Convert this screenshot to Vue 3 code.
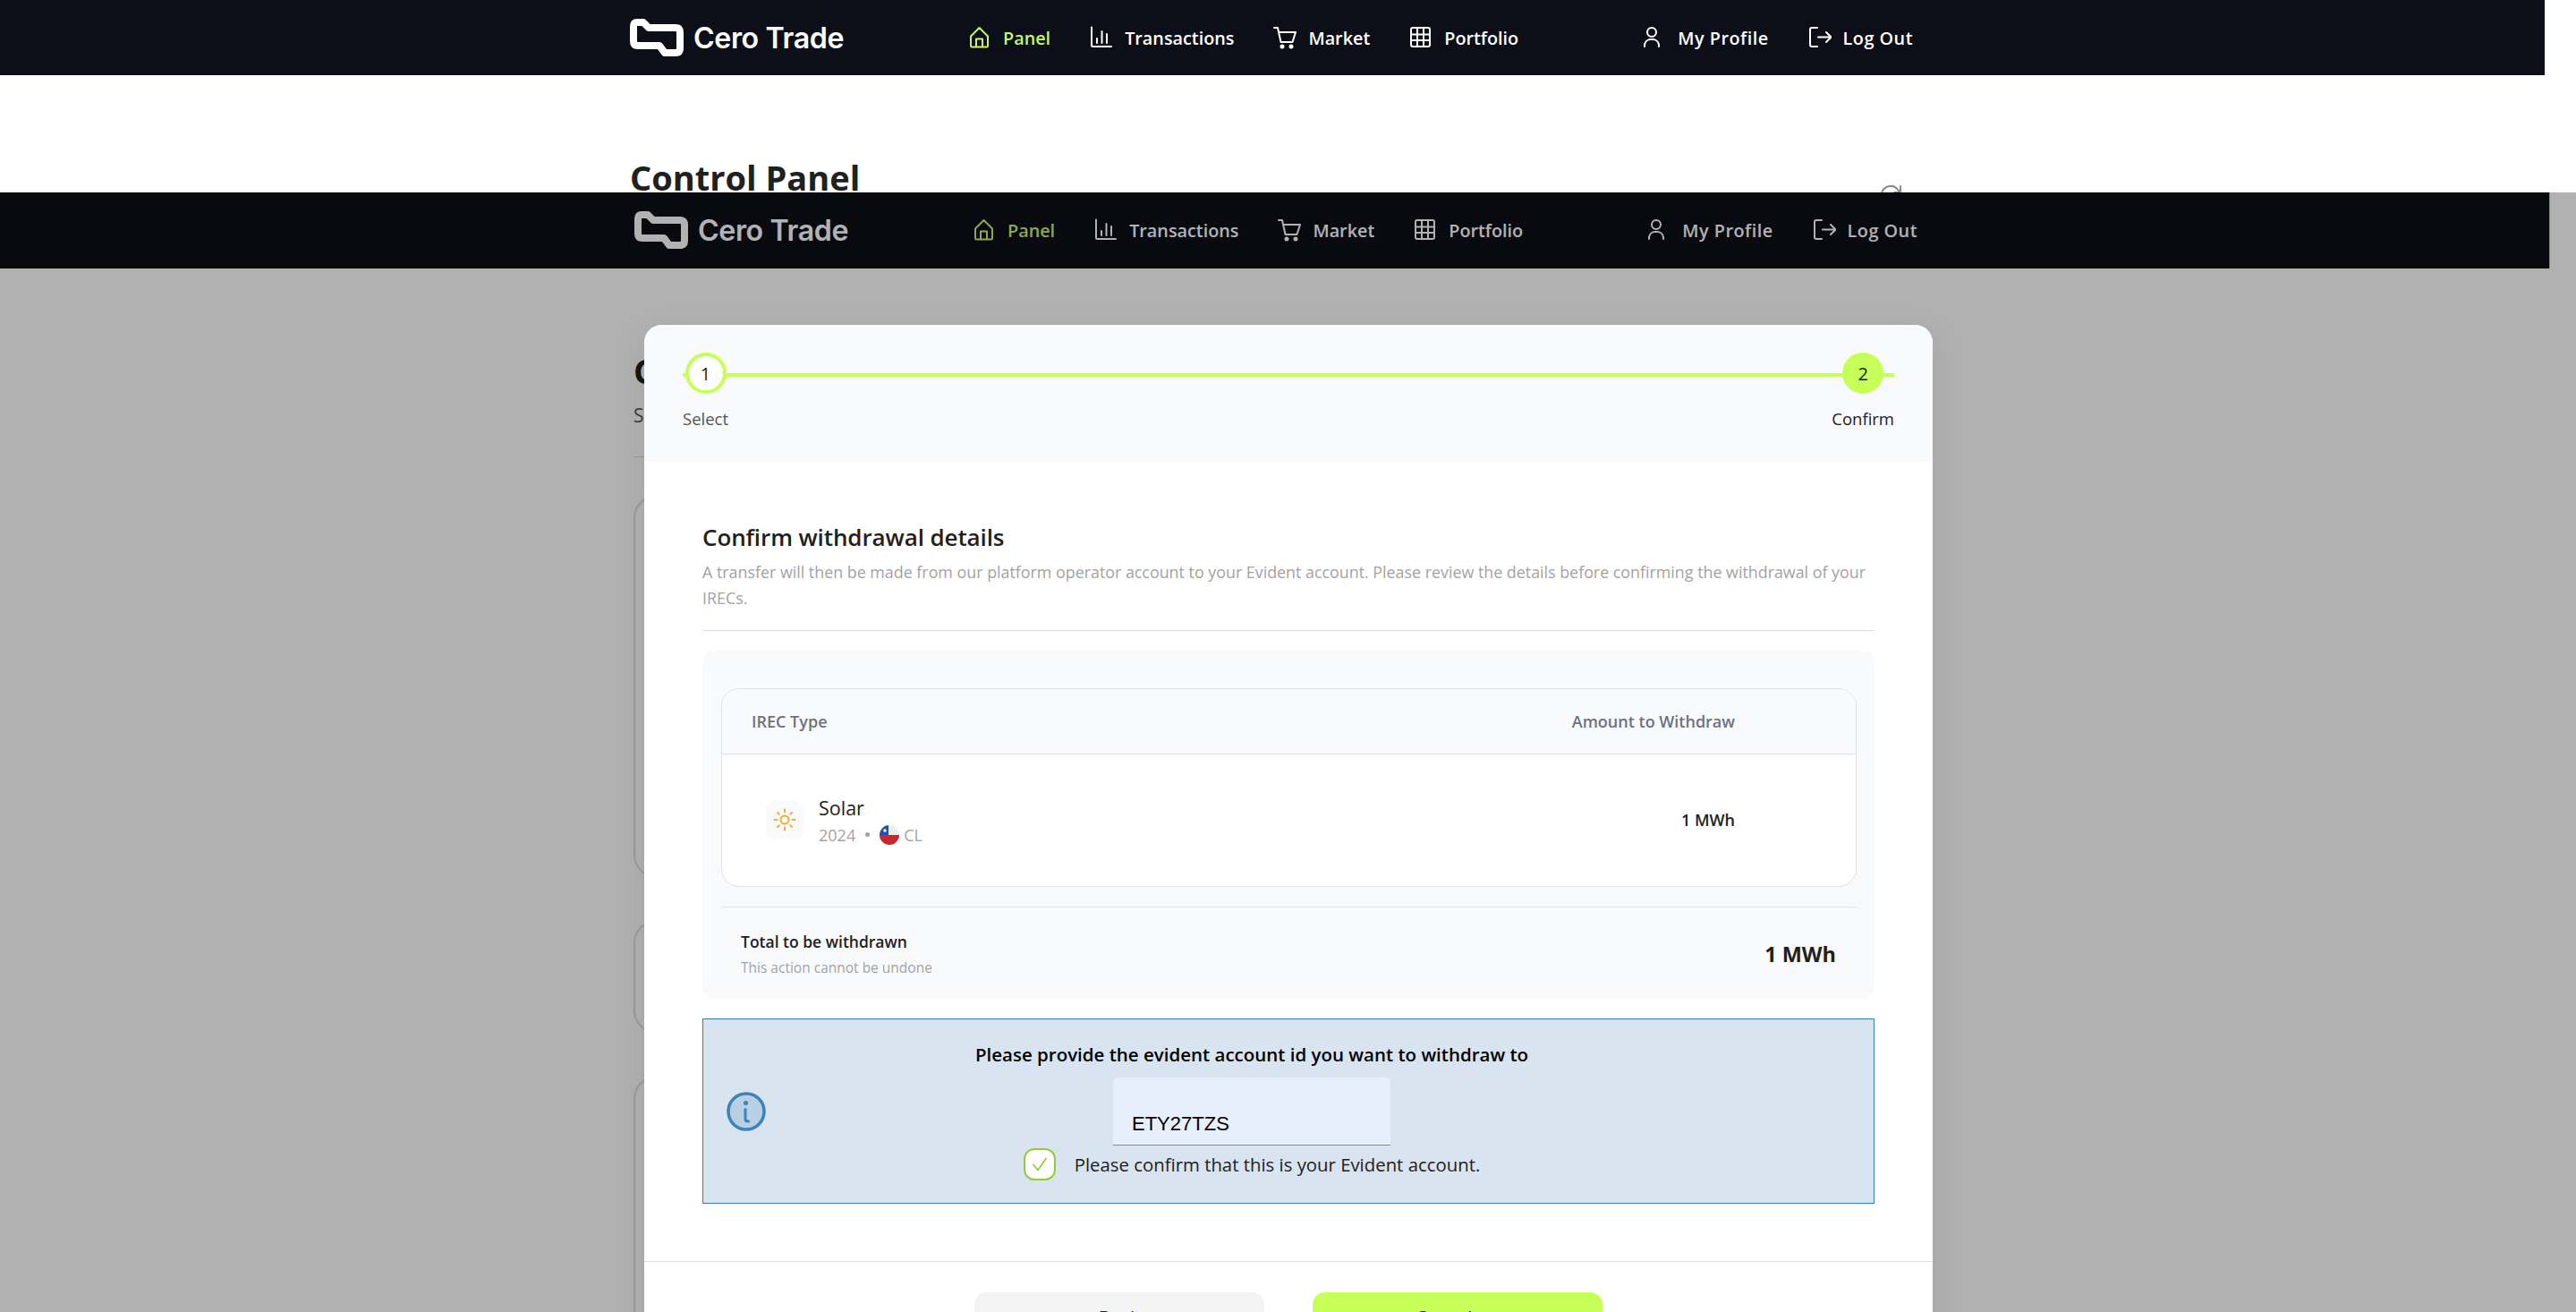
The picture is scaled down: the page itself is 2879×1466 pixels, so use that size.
<script setup>
const shots = [
  { id: 'top', dim: false },
  { id: 'dim', dim: true },
];

const links = [
  { label: 'Panel', icon: 'home', active: true },
  { label: 'Transactions', icon: 'chart' },
  { label: 'Market', icon: 'cart' },
  { label: 'Portfolio', icon: 'grid' },
];

const accountLinks = [
  { label: 'My Profile', icon: 'user' },
  { label: 'Log Out', icon: 'logout' },
];

const iconPaths = {
  home: 'M3 11.5 12.5 2 22 11.5V22a1.5 1.5 0 0 1-1.5 1.5h-16A1.5 1.5 0 0 1 3 22ZM9 23.5V14.5h7v9',
  chart: 'M2 1.5V21.5a1.5 1.5 0 0 0 1.5 1.5H24M8 19v-5M13.500 19V6M19 19V9',
  cart: 'M1 2h4l3.500 16h13L25 7H6.200',
  grid: 'M4 2h17a2 2 0 0 1 2 2v17a2 2 0 0 1-2 2H4a2 2 0 0 1-2-2V4a2 2 0 0 1 2-2ZM2 9.500h21M2 16h21M9 2v21M16 2v21',
  user: 'M10 2a5 5 0 1 1 0 10a5 5 0 0 1 0-10ZM2 23v-2a7 7 0 0 1 7-6h2a7 7 0 0 1 7 6v2',
  logout: 'M10 2H4a2 2 0 0 0-2 2v17a2 2 0 0 0 2 2h6M11 12.500h14M20 7l5.500 5.500L20 18',
};
</script>

<template>
  <div class="viewport">
    <section v-for="shot in shots" :key="shot.id" class="shot" :class="{ dim: shot.dim }">
      <header class="nav">
        <div class="nav-inner">
          <div class="brand">
            <svg class="brand-mark" width="60" height="42" viewBox="0 0 60 42" fill="none">
              <path d="M8 4H15L21 10H51Q56 10 56 15V33Q56 38 51 38H39L33 30H9Q4 30 4 25V9Q4 4 8 4Z" stroke="currentColor" stroke-width="8" stroke-linejoin="round" />
            </svg>
            <span class="brand-name">Cero Trade</span>
          </div>
          <nav class="links">
            <a v-for="link in links" :key="link.label" class="link" :class="{ active: link.active }">
              <svg width="26" height="26" viewBox="0 0 26 26" fill="none" stroke="currentColor" stroke-width="2" stroke-linecap="round" stroke-linejoin="round">
                <path :d="iconPaths[link.icon]" />
                <template v-if="link.icon === 'cart'">
                  <circle cx="10" cy="23" r="1.500" fill="currentColor" />
                  <circle cx="20" cy="23" r="1.500" fill="currentColor" />
                </template>
              </svg>
              <span>{{ link.label }}</span>
            </a>
          </nav>
          <nav class="links account">
            <a v-for="link in accountLinks" :key="link.label" class="link">
              <svg width="26" height="26" viewBox="0 0 26 26" fill="none" stroke="currentColor" stroke-width="2" stroke-linecap="round" stroke-linejoin="round">
                <path :d="iconPaths[link.icon]" />
              </svg>
              <span>{{ link.label }}</span>
            </a>
          </nav>
        </div>
      </header>

      <main class="page">
        <div class="page-head">
          <h1>Control Panel</h1>
          <svg class="refresh" width="26" height="26" viewBox="0 0 26 26" fill="none" stroke="#8a8a8a" stroke-width="2" stroke-linecap="round" stroke-linejoin="round">
            <path d="M3 13a10 10 0 0 1 18-6l3 3M24 3v7h-7" />
          </svg>
        </div>
        <p class="page-sub">Summary</p>
        <div class="page-rule"></div>
        <div class="card card-a"></div>
        <div class="card card-b"></div>
        <div class="card card-c"></div>
      </main>

      <template v-if="shot.dim">
        <div class="overlay"></div>
        <div class="modal">
          <div class="stepper">
            <div class="step">
              <div class="step-dot">1</div>
              <span class="step-label">Select</span>
            </div>
            <div class="step current">
              <div class="step-dot">2</div>
              <span class="step-label">Confirm</span>
            </div>
          </div>

          <div class="modal-body">
            <h2>Confirm withdrawal details</h2>
            <p class="lead">A transfer will then be made from our platform operator account to your Evident account. Please review the details before confirming the withdrawal of your IRECs.</p>

            <div class="summary">
              <div class="table">
                <div class="table-head">
                  <span>IREC Type</span>
                  <span>Amount to Withdraw</span>
                </div>
                <div class="table-row">
                  <div class="source">
                    <div class="source-icon">
                      <svg width="26" height="26" viewBox="0 0 26 26" fill="none" stroke="#e9b13c" stroke-width="2" stroke-linecap="round">
                        <circle cx="13" cy="13" r="4.500" />
                        <path d="M13 1.500v3M13 21.500v3M1.500 13h3M21.500 13h3M5 5l1.800 1.800M19.200 19.200 21 21M5 21l1.800-1.800M19.200 6.800 21 5" />
                      </svg>
                    </div>
                    <div class="source-text">
                      <div class="source-name">Solar</div>
                      <div class="source-meta">
                        <span>2024</span>
                        <i class="bullet"></i>
                        <svg class="flag" width="22" height="22" viewBox="0 0 22 22">
                          <clipPath id="flag-round"><circle cx="11" cy="11" r="11" /></clipPath>
                          <g clip-path="url(#flag-round)">
                            <rect width="22" height="11" fill="#eeeeee" />
                            <rect y="11" width="22" height="11" fill="#c9262f" />
                            <rect width="10" height="11" fill="#2152ad" />
                            <circle cx="6" cy="6" r="1.800" fill="#ffffff" />
                          </g>
                        </svg>
                        <span>CL</span>
                      </div>
                    </div>
                  </div>
                  <span class="amount">1 MWh</span>
                </div>
              </div>
              <div class="total">
                <div>
                  <div class="total-label">Total to be withdrawn</div>
                  <div class="total-note">This action cannot be undone</div>
                </div>
                <span class="total-value">1 MWh</span>
              </div>
            </div>

            <div class="notice">
              <svg class="notice-icon" width="44" height="44" viewBox="0 0 44 44">
                <circle cx="22" cy="22" r="20" fill="#b8cfe4" stroke="#3f82b8" stroke-width="3.500" />
                <circle cx="21.500" cy="12.500" r="2.500" fill="#3f82b8" />
                <path d="M21 19.500v10.500q0 3 3.500 3" fill="none" stroke="#3f82b8" stroke-width="3" stroke-linecap="round" />
              </svg>
              <div class="notice-body">
                <p class="notice-title">Please provide the evident account id you want to withdraw to</p>
                <input class="account-input" value="ETY27TZS" readonly />
                <div class="confirm-row">
                  <div class="checkbox">
                    <svg width="20" height="20" viewBox="0 0 20 20" fill="none" stroke="#93cb3f" stroke-width="1.700" stroke-linecap="round" stroke-linejoin="round">
                      <path d="M3 10.500 8 16.500 17 3.500" />
                    </svg>
                  </div>
                  <span>Please confirm that this is your Evident account.</span>
                </div>
              </div>
            </div>
          </div>

          <div class="modal-foot">
            <button class="btn btn-back">Back</button>
            <button class="btn btn-complete">Complete</button>
          </div>
        </div>
      </template>
    </section>
  </div>
</template>

<style scoped>
.viewport {
  width: 2879px;
  height: 1466px;
  overflow: hidden;
  font-family: "Open Sans", "Noto Sans", sans-serif;
  color: #1f2020;
}

.shot {
  position: relative;
  height: 215px;
  overflow: hidden;
}

.shot.dim {
  height: 1251px;
  background: #fefefe;
}

.nav {
  width: 2844px;
  height: 84px;
  background: #0c0f18;
  color: #fff;
}

.dim .nav {
  width: 2849px;
  height: 85px;
  border-right: 1px solid #c4c4c4;
}

.nav-inner {
  display: flex;
  align-items: center;
  width: 1434px;
  height: 84px;
  margin-left: 704px;
}

.dim .nav-inner {
  margin-left: 709px;
}

.brand {
  display: flex;
  align-items: center;
  gap: 11px;
  width: 378px;
}

.brand-name {
  font-family: Inter, "Liberation Sans", sans-serif;
  font-size: 32.2px;
  font-weight: 600;
  letter-spacing: -0.4px;
}

.links {
  display: flex;
  gap: 44px;
}

.account {
  margin-left: auto;
  letter-spacing: 0.5px;
}

.link {
  display: flex;
  align-items: center;
  gap: 13px;
  font-size: 19.8px;
  font-weight: 600;
  white-space: nowrap;
}

.link.active {
  color: #c6f56a;
}

.page {
  padding: 90px 0 0 704px;
  width: 1430px;
}

.dim .page {
  padding-left: 708px;
}

.page-head {
  display: flex;
  justify-content: space-between;
  align-items: flex-start;
  height: 58px;
}

.page-head h1 {
  margin: 0;
  font-size: 38px;
  line-height: 48px;
  font-weight: 700;
}

.refresh {
  margin-top: 31px;
  margin-right: 8px;
}

.page-sub {
  margin: 1px 0 0;
  font-size: 21px;
  line-height: 30px;
  color: #555;
}

.page-rule {
  height: 1px;
  margin-top: 31px;
  background: #ddd;
}

.card {
  margin-top: 47px;
  border: 2px solid #ddd;
  border-radius: 26px;
  box-sizing: border-box;
}

.card-a { height: 428px; margin-top: 42px; }
.card-b { height: 127px; }
.card-c { height: 300px; }

.overlay {
  position: absolute;
  inset: 0;
  background: rgba(0, 0, 0, 0.3);
}

.modal {
  position: absolute;
  left: 720px;
  top: 148px;
  width: 1440px;
  background: #fff;
  border-radius: 20px 20px 0 0;
  box-shadow: 0 10px 40px rgba(0, 0, 0, 0.08);
}

.stepper {
  position: relative;
  display: flex;
  justify-content: space-between;
  height: 153px;
  padding: 31px 43px 0;
  box-sizing: border-box;
  background: #f9fafb;
  border-radius: 20px 20px 0 0;
}

.stepper::before {
  content: "";
  position: absolute;
  left: 43px;
  right: 43px;
  top: 54px;
  height: 4px;
  background: #c6ff58;
}

.step {
  position: relative;
  display: flex;
  flex-direction: column;
  align-items: center;
  min-width: 51px;
}

.step-dot {
  display: flex;
  align-items: center;
  justify-content: center;
  width: 46px;
  height: 46px;
  box-sizing: border-box;
  border: 4px solid #c6ff58;
  border-radius: 50%;
  background: #fff;
  font-size: 20px;
}

.current .step-dot {
  background: #c6ff58;
  font-weight: 500;
}

.step-label {
  margin-top: 16px;
  font-size: 18.5px;
  line-height: 24px;
  color: #555;
}

.current .step-label {
  color: #1f2020;
  font-weight: 500;
}

.modal-body {
  padding: 66px 65px 0;
}

h2 {
  margin: 0;
  font-size: 26px;
  line-height: 36px;
  font-weight: 600;
  letter-spacing: -0.1px;
}

.lead {
  margin: 7px 0 0;
  padding-bottom: 21px;
  border-bottom: 1px solid #e0e0e0;
  font-size: 17.85px;
  line-height: 29px;
  color: #a3a3a3;
}

.summary {
  margin-top: 22px;
  padding: 42px 20px 0 21px;
  height: 389px;
  box-sizing: border-box;
  background: #f9fafb;
  border-radius: 14px;
}

.table {
  height: 222px;
  box-sizing: border-box;
  border: 1px solid #dfe1e5;
  border-radius: 20px;
  overflow: hidden;
  background: #fff;
}

.table-head {
  display: flex;
  justify-content: space-between;
  align-items: center;
  height: 73px;
  padding: 0 135px 0 33px;
  box-sizing: border-box;
  border-bottom: 1px solid #dfe1e5;
  background: #f9fafb;
  font-size: 18px;
  font-weight: 600;
  color: #6b7280;
}

.table-row {
  display: flex;
  justify-content: space-between;
  align-items: center;
  height: 146px;
  padding: 0 135px 0 49px;
}

.source {
  display: flex;
  align-items: center;
  gap: 17px;
}

.source-icon {
  display: flex;
  align-items: center;
  justify-content: center;
  width: 42px;
  height: 43px;
  border-radius: 10px;
  background: #f9fafb;
}

.source-text {
  padding-top: 3px;
}

.source-name {
  font-size: 21.5px;
  line-height: 30px;
  font-weight: 500;
}

.source-meta {
  display: flex;
  align-items: center;
  height: 30px;
  font-size: 18px;
  color: #a3a3a3;
}

.bullet {
  width: 5px;
  height: 5px;
  margin: 0 11px;
  border-radius: 50%;
  background: #a3a3a3;
}

.flag {
  margin: 0 5px 0 0;
}

.amount {
  font-size: 18px;
  font-weight: 600;
}

.total {
  display: flex;
  justify-content: space-between;
  align-items: center;
  margin-top: 22px;
  padding: 23px 23px 0 22px;
  border-top: 1px solid #dfe1e5;
}

.total-label {
  font-size: 17.5px;
  line-height: 30px;
  font-weight: 600;
}

.total-note {
  font-size: 15.5px;
  line-height: 28px;
  color: #a3a3a3;
}

.total-value {
  font-size: 23.5px;
  font-weight: 700;
}

.notice {
  display: flex;
  align-items: center;
  margin-top: 22px;
  height: 207px;
  box-sizing: border-box;
  padding: 0 152px 2px 26px;
  border: 1px solid #3a7bb3;
  background: #d8e4f0;
}

.notice-icon {
  margin-top: 2px;
}

.notice-body {
  flex: 1;
  display: flex;
  flex-direction: column;
  align-items: center;
}

.notice-title {
  margin: 0;
  font-size: 20.5px;
  line-height: 30px;
  font-weight: 600;
  color: #000;
}

.account-input {
  width: 310px;
  height: 76px;
  margin-top: 11px;
  padding: 30px 21px 0;
  box-sizing: border-box;
  border: 0;
  border-bottom: 1px solid #8a8a8a;
  border-radius: 6px 6px 0 0;
  background: #e8effc;
  font-family: "Liberation Sans", sans-serif;
  font-size: 22px;
  color: #000;
}

.confirm-row {
  display: flex;
  align-items: center;
  gap: 21px;
  margin-top: 3px;
  font-size: 20.35px;
}

.checkbox {
  display: flex;
  align-items: center;
  justify-content: center;
  width: 36px;
  height: 36px;
  box-sizing: border-box;
  border: 2.5px solid #93cb3f;
  border-radius: 12px;
  background: #fff;
}

.modal-foot {
  display: flex;
  justify-content: center;
  gap: 54px;
  margin-top: 64px;
  padding-top: 34px;
  border-top: 1px solid #e0e0e0;
}

.btn {
  width: 324px;
  height: 70px;
  padding: 0 0 12px;
  border: 0;
  border-radius: 14px;
  font-family: inherit;
  font-size: 21px;
  font-weight: 500;
  color: #1f2020;
}

.btn-back {
  background: #f3f3f3;
}

.btn-complete {
  background: #c6ff58;
}
</style>

<style>
html,
body {
  margin: 0;
  background: #fff;
  overflow: hidden;
}
</style>
